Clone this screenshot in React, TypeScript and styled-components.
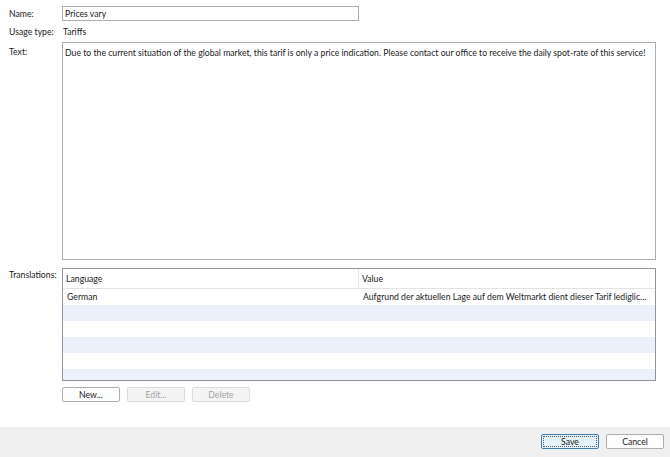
import React from 'react'
import styled, { createGlobalStyle } from 'styled-components'

const GlobalStyle = createGlobalStyle`
  html, body {
    margin: 0;
    padding: 0;
    background: #ffffff;
  }
  body {
    font-family: Lato, "Liberation Sans", sans-serif;
    font-size: 8.7px;
    color: #1b1b1b;
  }
`

const Dialog = styled.div`
  width: 670px;
  height: 457px;
  display: flex;
  flex-direction: column;
  overflow: hidden;
`

const Content = styled.div`
  flex: 1;
  display: flex;
  flex-direction: column;
  gap: 3px;
  padding: 6px 14px 0 9px;
`

const FormRow = styled.div<{ $gapTop?: number }>`
  display: grid;
  grid-template-columns: 53px 1fr;
  align-items: start;
  margin-top: ${p => p.$gapTop || 0}px;
`

const Label = styled.div<{ $offset?: number; $height?: number }>`
  padding-top: ${p => p.$offset || 0}px;
  height: ${p => p.$height || 15}px;
  line-height: ${p => p.$height || 15}px;
  white-space: nowrap;
`

const Value = styled.div`
  height: 15px;
  line-height: 15px;
  padding-left: 1px;
`

const TextInput = styled.div<{ $width?: number }>`
  box-sizing: border-box;
  width: ${p => p.$width || 297}px;
  height: 15px;
  line-height: 13px;
  border: 1px solid #abadb3;
  padding: 0 2px;
`

const TextArea = styled.div`
  box-sizing: border-box;
  height: 218px;
  border: 1px solid #abadb3;
  padding: 4px 2px;
  line-height: 11px;
  white-space: nowrap;
  overflow: hidden;
`

const FieldStack = styled.div`
  display: flex;
  flex-direction: column;
  gap: 6px;
`

const Grid = styled.div`
  box-sizing: border-box;
  height: 113px;
  border: 1px solid #8f939c;
  overflow: hidden;
  background: #ffffff;
`

const GridRow = styled.div<{ $alt?: boolean; $header?: boolean }>`
  display: grid;
  grid-template-columns: 296px 1fr;
  height: ${p => (p.$header ? 19 : 16)}px;
  line-height: ${p => (p.$header ? 19 : 16)}px;
  background: ${p => (p.$alt ? '#ebf1fb' : '#ffffff')};
  border-bottom: ${p => (p.$header ? '1px solid #e3e3e3' : 'none')};
`

const Cell = styled.div<{ $header?: boolean; $divider?: boolean }>`
  padding-left: ${p => (p.$header ? 3 : 4)}px;
  white-space: nowrap;
  overflow: hidden;
  border-right: ${p => (p.$divider ? '1px solid #e3e3e3' : 'none')};
`

const ButtonBar = styled.div<{ $align?: string }>`
  display: flex;
  gap: 7px;
  justify-content: ${p => p.$align || 'flex-start'};
`

const Button = styled.button<{ $default?: boolean }>`
  box-sizing: border-box;
  width: 58px;
  height: 15px;
  padding: 0;
  font: inherit;
  line-height: 13px;
  border-radius: 2px;
  color: #1b1b1b;
  background: ${p => (p.$default ? '#e5f1fb' : '#fdfdfd')};
  border: 1px solid ${p => (p.$default ? '#3c7fb1' : '#adadad')};
  outline: ${p => (p.$default ? '1px dotted #5a5a5a' : 'none')};
  outline-offset: -3px;

  &:disabled {
    color: #a3a3a3;
    background: #f4f4f4;
    border-color: #dcdcdc;
  }
`

const Footer = styled.div`
  height: 30px;
  background: #f0f0f0;
  padding: 7px 6px 0 0;
  box-sizing: border-box;
`

const translations = [
  {
    language: 'German',
    value: 'Aufgrund der aktuellen Lage auf dem Weltmarkt dient dieser Tarif lediglic...',
  },
]

const App: React.FC = () => {
  const emptyRows = 6

  return (
    <>
      <GlobalStyle />
      <Dialog>
        <Content>
          <FormRow>
            <Label>Name:</Label>
            <TextInput>Prices vary</TextInput>
          </FormRow>
          <FormRow>
            <Label>Usage type:</Label>
            <Value>Tariffs</Value>
          </FormRow>
          <FormRow>
            <Label $offset={3} $height={13}>Text:</Label>
            <TextArea>
              Due to the current situation of the global market, this tarif is only a price indication. Please contact
              our office to receive the daily spot-rate of this service!
            </TextArea>
          </FormRow>
          <FormRow $gapTop={5}>
            <Label $offset={0} $height={13}>Translations:</Label>
            <FieldStack>
              <Grid>
                <GridRow $header>
                  <Cell $header $divider>Language</Cell>
                  <Cell $header>Value</Cell>
                </GridRow>
                {translations.map(t => (
                  <GridRow key={t.language}>
                    <Cell>{t.language}</Cell>
                    <Cell>{t.value}</Cell>
                  </GridRow>
                ))}
                {Array.from({ length: emptyRows }).map((_, i) => (
                  <GridRow key={i} $alt={i % 2 === 0}>
                    <Cell />
                    <Cell />
                  </GridRow>
                ))}
              </Grid>
              <ButtonBar>
                <Button>New...</Button>
                <Button disabled>Edit...</Button>
                <Button disabled>Delete</Button>
              </ButtonBar>
            </FieldStack>
          </FormRow>
        </Content>
        <Footer>
          <ButtonBar $align="flex-end">
            <Button $default>Save</Button>
            <Button>Cancel</Button>
          </ButtonBar>
        </Footer>
      </Dialog>
    </>
  )
}

export default App
